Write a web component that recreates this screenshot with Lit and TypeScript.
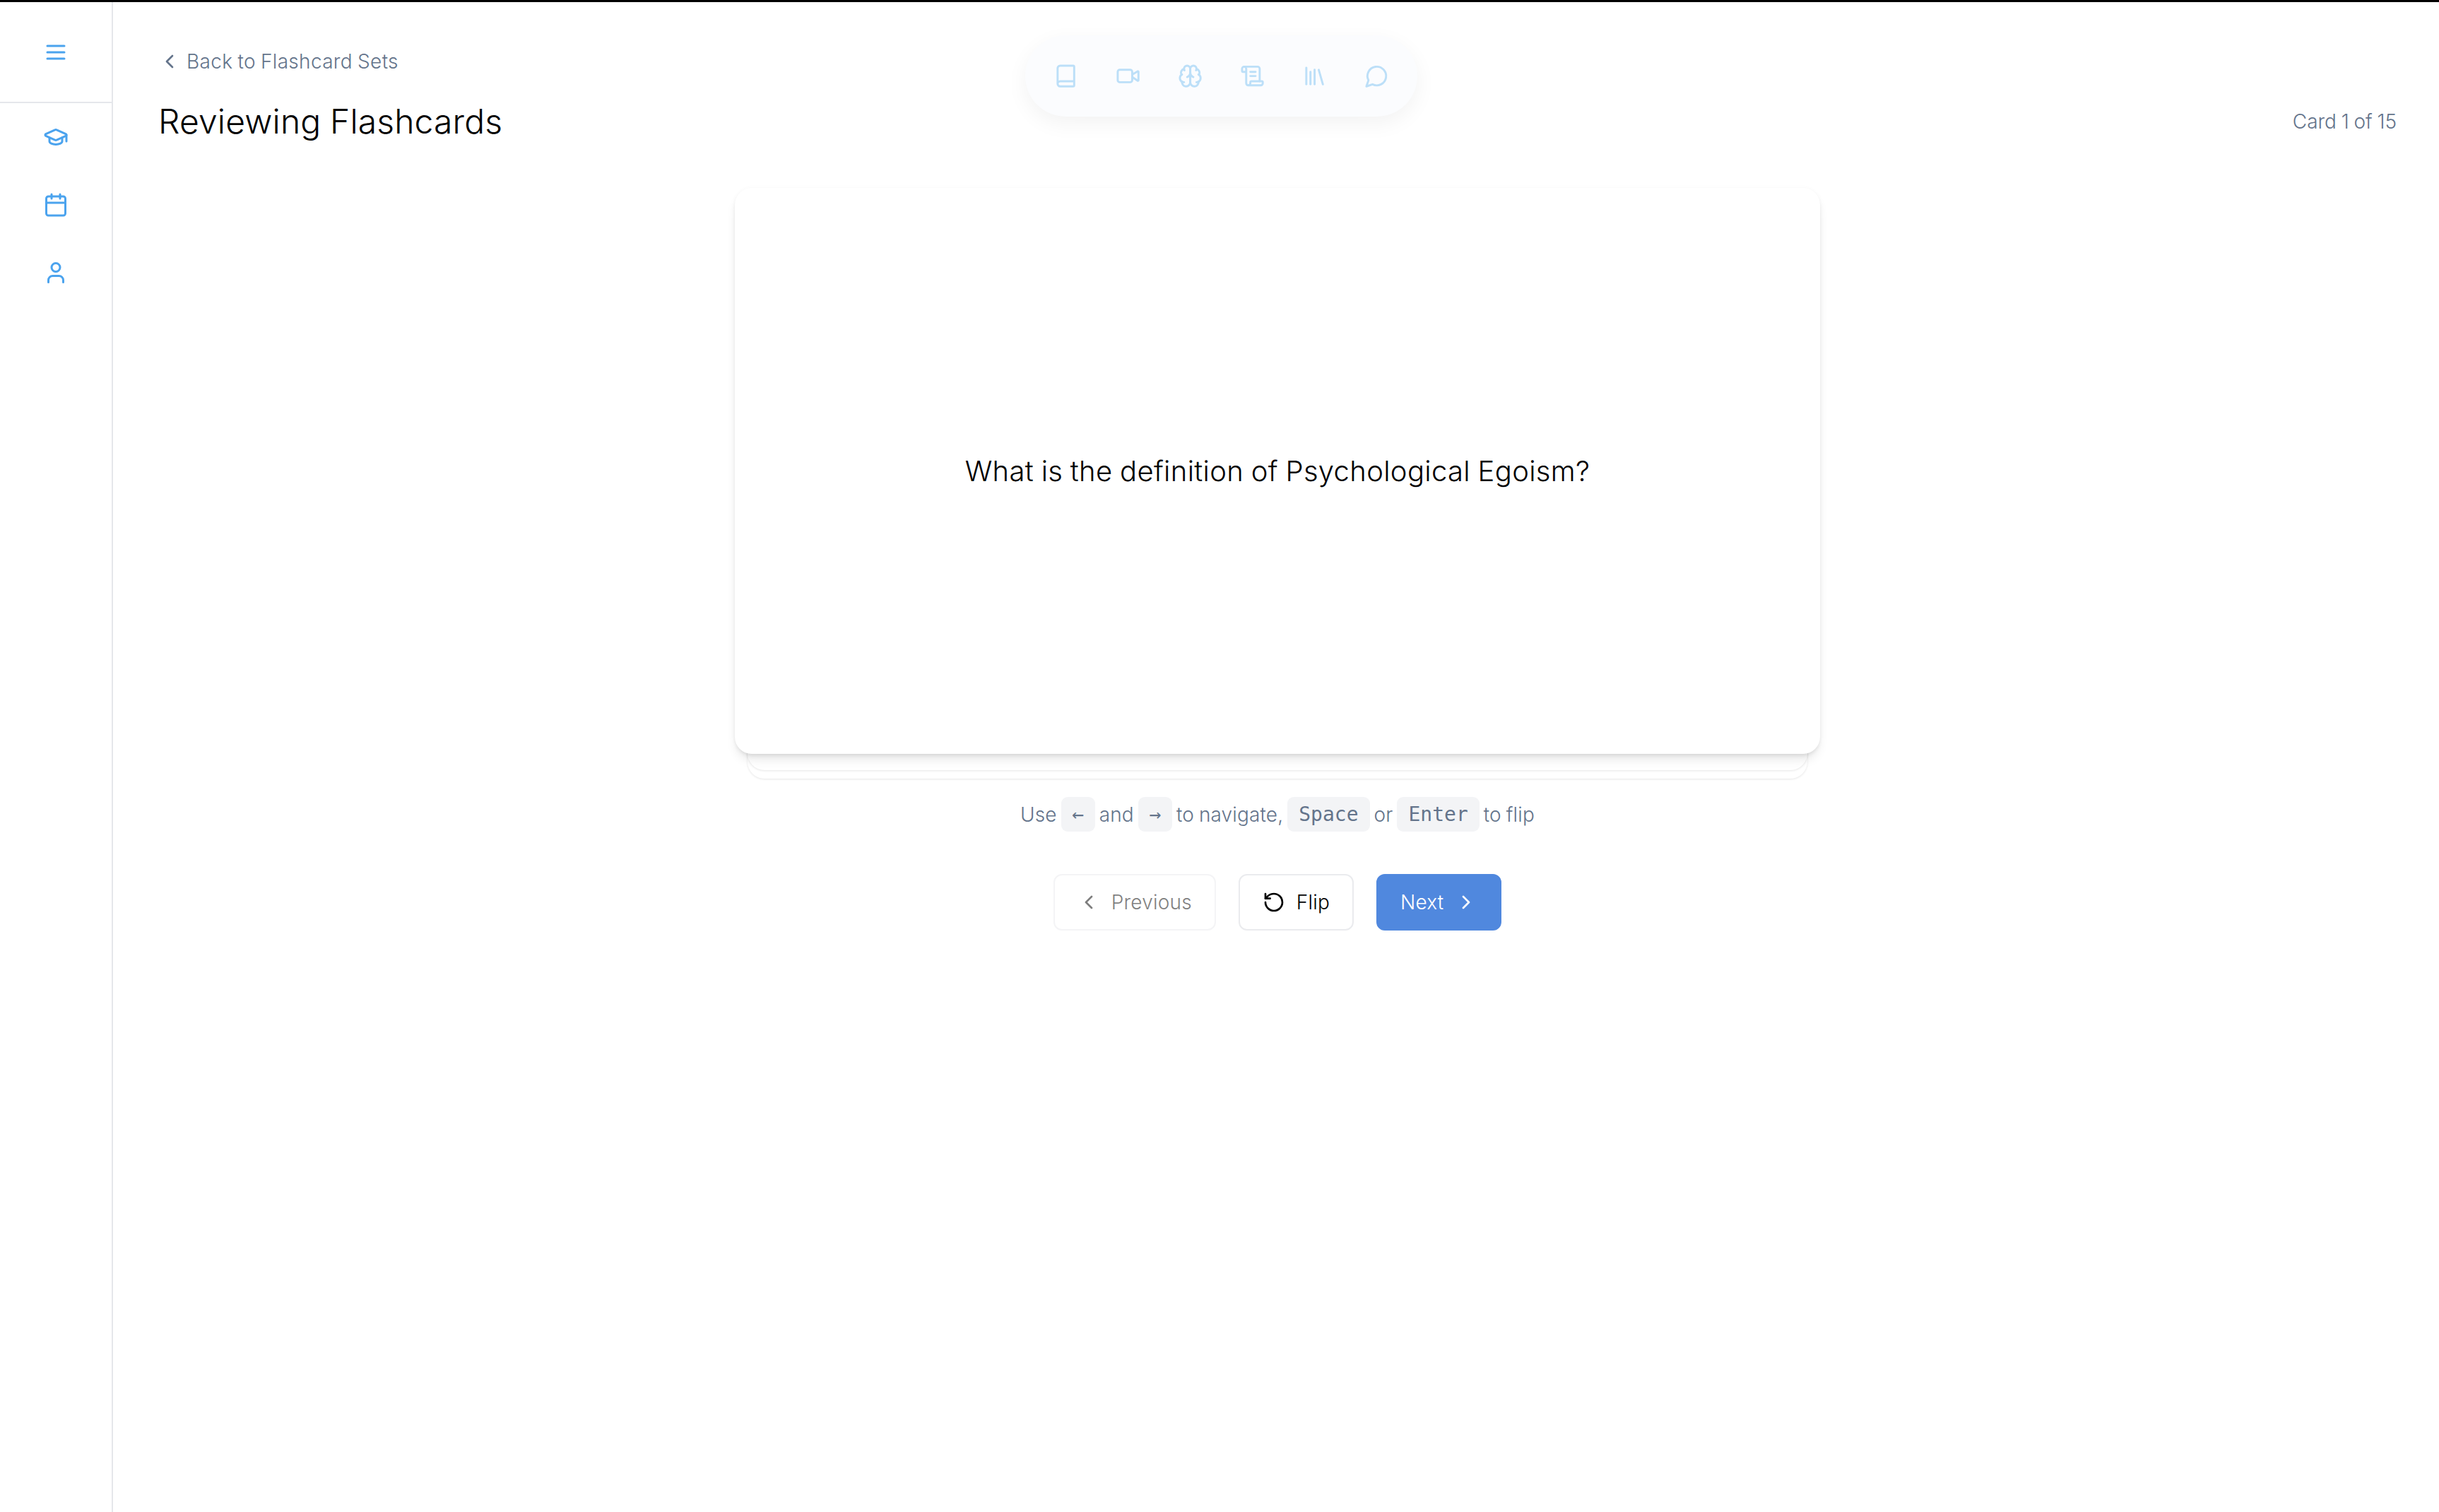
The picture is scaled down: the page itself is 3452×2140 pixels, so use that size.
import { LitElement, html, css, svg } from "lit";
import { customElement } from "lit/decorators.js";

const ICONS: Record<string, any> = {
  menu: svg`<path d="M4 6h16"/><path d="M4 12h16"/><path d="M4 18h16"/>`,
  cap: svg`<path d="M21.42 10.922a1 1 0 0 0-.019-1.838L12.83 5.18a2 2 0 0 0-1.66 0L2.6 9.08a1 1 0 0 0 0 1.832l8.57 3.908a2 2 0 0 0 1.66 0z"/><path d="M22 10v6"/><path d="M6 12.5V16a6 3 0 0 0 12 0v-3.5"/>`,
  calendar: svg`<path d="M8 2v4"/><path d="M16 2v4"/><rect x="3" y="4" width="18" height="18" rx="2"/><path d="M3 10h18"/>`,
  user: svg`<path d="M19 21v-2a4 4 0 0 0-4-4H9a4 4 0 0 0-4 4v2"/><circle cx="12" cy="7" r="4"/>`,
  book: svg`<path d="M4 19.5v-15A2.5 2.5 0 0 1 6.5 2H19a1 1 0 0 1 1 1v18a1 1 0 0 1-1 1H6.5a1 1 0 0 1 0-5H20"/>`,
  video: svg`<path d="m16 13 5.223 3.482a.5.5 0 0 0 .777-.416V7.87a.5.5 0 0 0-.752-.432L16 10.5"/><rect x="2" y="6" width="14" height="12" rx="2"/>`,
  brain: svg`<path d="M12 5a3 3 0 1 0-5.997.125 4 4 0 0 0-2.526 5.77 4 4 0 0 0 .556 6.588A4 4 0 1 0 12 18Z"/><path d="M12 5a3 3 0 1 1 5.997.125 4 4 0 0 1 2.526 5.77 4 4 0 0 1-.556 6.588A4 4 0 1 1 12 18Z"/><path d="M15 13a4.5 4.5 0 0 1-3-4 4.5 4.5 0 0 1-3 4"/><path d="M17.599 6.5a3 3 0 0 0 .399-1.375"/><path d="M6.003 5.125A3 3 0 0 0 6.401 6.5"/><path d="M3.477 10.896a4 4 0 0 1 .585-.396"/><path d="M19.938 10.5a4 4 0 0 1 .585.396"/><path d="M6 18a4 4 0 0 1-1.967-.516"/><path d="M19.967 17.484A4 4 0 0 1 18 18"/>`,
  scroll: svg`<path d="M15 12h-5"/><path d="M15 8h-5"/><path d="M19 17V5a2 2 0 0 0-2-2H4"/><path d="M8 21h12a2 2 0 0 0 2-2v-1a1 1 0 0 0-1-1H11a1 1 0 0 0-1 1v1a2 2 0 1 1-4 0V5a2 2 0 1 0-4 0v2a1 1 0 0 0 1 1h3"/>`,
  library: svg`<path d="m16 6 4 14"/><path d="M12 6v14"/><path d="M8 8v12"/><path d="M4 4v16"/>`,
  message: svg`<path d="M7.9 20A9 9 0 1 0 4 16.1L2 22Z"/>`,
  left: svg`<path d="m15 18-6-6 6-6"/>`,
  right: svg`<path d="m9 18 6-6-6-6"/>`,
  rotate: svg`<path d="M3 12a9 9 0 1 0 9-9 9.75 9.75 0 0 0-6.74 2.74L3 8"/><path d="M3 3v5h5"/>`,
};

const icon = (name: string, cls = "") =>
  html`<svg class="ic ${cls}" viewBox="0 0 24 24" fill="none" stroke="currentColor" stroke-width="2" stroke-linecap="round" stroke-linejoin="round">${ICONS[name]}</svg>`;

@customElement("app-root")
export class AppRoot extends LitElement {
  static styles = css`
    :host {
      display: flex;
      position: relative;
      box-sizing: border-box;
      min-height: 100vh;
      border-top: 3px solid #000;
      background: #fff;
      font-family: Inter, "Liberation Sans", sans-serif;
      font-weight: 300;
      color: #000;
      word-spacing: -0.06em;
    }
    .ic { display: block; flex: none; }
    .sidebar {
      flex: none;
      box-sizing: border-box;
      width: 160px;
      border-right: 2px solid #e5e7eb;
      color: #4ba3ee;
    }
    .side-head {
      box-sizing: border-box;
      height: 143px;
      border-bottom: 2px solid #e5e7eb;
      display: flex;
      align-items: center;
      justify-content: center;
    }
    .side-item {
      height: 96px;
      display: flex;
      align-items: center;
      justify-content: center;
    }
    .side-head .ic, .side-item .ic { width: 36px; height: 36px; }
    .main {
      flex: 1;
      min-width: 0;
      padding: 64px 60px 0 64px;
    }
    .back {
      display: flex;
      align-items: center;
      gap: 8px;
      height: 40px;
      font-size: 28px;
      letter-spacing: 0.011em;
      color: #64748b;
    }
    .back .ic { width: 32px; height: 32px; }
    .title-row {
      display: flex;
      align-items: center;
      justify-content: space-between;
      margin-top: 33px;
      height: 64px;
    }
    h1 { margin: 0; font-size: 48px; font-weight: 300; line-height: 64px; letter-spacing: 0.003em; }
    .count { font-size: 28px; color: #64748b; letter-spacing: -0.002em; }
    .card-wrap {
      position: relative;
      width: 1536px;
      margin: 62px auto 0;
    }
    .layer {
      position: absolute;
      left: 18px;
      right: 18px;
      height: 200px;
      background: #fff;
      border-radius: 24px;
      box-shadow: 0 1px 3px rgba(0, 0, 0, 0.1);
    }
    .layer.a { bottom: -35px; }
    .layer.b { bottom: -23px; }
    .card {
      position: relative;
      height: 801px;
      background: #fff;
      border-radius: 24px;
      box-shadow: 0 10px 15px -3px rgba(0, 0, 0, 0.1), 0 4px 6px -2px rgba(0, 0, 0, 0.08), 0 0 6px rgba(0, 0, 0, 0.03);
      display: flex;
      align-items: center;
      justify-content: center;
      font-size: 40px;
      letter-spacing: 0.008em;
    }
    .hint {
      display: flex;
      align-items: center;
      justify-content: center;
      gap: 6px;
      margin-top: 61px;
      height: 49px;
      font-size: 28px;
      letter-spacing: 0.005em;
      color: #64748b;
    }
    .kbd {
      display: flex;
      align-items: center;
      box-sizing: border-box;
      height: 49px;
      padding: 0 16px;
      border-radius: 9px;
      background: #f3f4f6;
      font-family: "DejaVu Sans Mono", monospace;
      font-size: 28px;
      font-weight: 400;
      letter-spacing: 0;
    }
    .kbd.small { padding: 0; width: 48px; justify-content: center; }
    .buttons {
      display: flex;
      justify-content: center;
      gap: 32px;
      margin-top: 60px;
    }
    .btn {
      display: flex;
      align-items: center;
      box-sizing: border-box;
      height: 80px;
      padding: 0 32px;
      gap: 16px;
      border-radius: 12px;
      border: 2px solid #eaebee;
      background: #fff;
      color: #000;
      font-family: inherit;
      font-size: 28px;
      font-weight: 300;
      letter-spacing: 0.007em;
      word-spacing: inherit;
    }
    .btn .ic { width: 32px; height: 32px; }
    .btn.disabled { opacity: 0.5; }
    .btn.primary { background: #5088de; border-color: #5088de; color: #fff; }
    .toolbar {
      position: absolute;
      top: 47px;
      left: 1451px;
      display: flex;
      gap: 52.8px;
      padding: 40px;
      border-radius: 58px;
      background: #fbfcfe;
      box-shadow: 0 10px 30px rgba(0, 0, 0, 0.05);
      color: #bcdff8;
    }
    .toolbar .ic { width: 35.2px; height: 35.2px; }
  `;

  render() {
    return html`
      <aside class="sidebar">
        <div class="side-head">${icon("menu")}</div>
        <div class="side-item">${icon("cap")}</div>
        <div class="side-item">${icon("calendar")}</div>
        <div class="side-item">${icon("user")}</div>
      </aside>
      <main class="main">
        <div class="back">${icon("left")}<span>Back to Flashcard Sets</span></div>
        <div class="title-row">
          <h1>Reviewing Flashcards</h1>
          <span class="count">Card 1 of 15</span>
        </div>
        <div class="card-wrap">
          <div class="layer a"></div>
          <div class="layer b"></div>
          <div class="card">What is the definition of Psychological Egoism?</div>
        </div>
        <div class="hint">
          <span>Use</span><span class="kbd small">←</span><span>and</span><span class="kbd small">→</span>
          <span>to navigate,</span><span class="kbd">Space</span><span>or</span><span class="kbd">Enter</span><span>to flip</span>
        </div>
        <div class="buttons">
          <button class="btn disabled">${icon("left")}<span>Previous</span></button>
          <button class="btn">${icon("rotate")}<span>Flip</span></button>
          <button class="btn primary"><span>Next</span>${icon("right")}</button>
        </div>
      </main>
      <nav class="toolbar">
        ${["book", "video", "brain", "scroll", "library", "message"].map((n) => icon(n))}
      </nav>
    `;
  }
}
